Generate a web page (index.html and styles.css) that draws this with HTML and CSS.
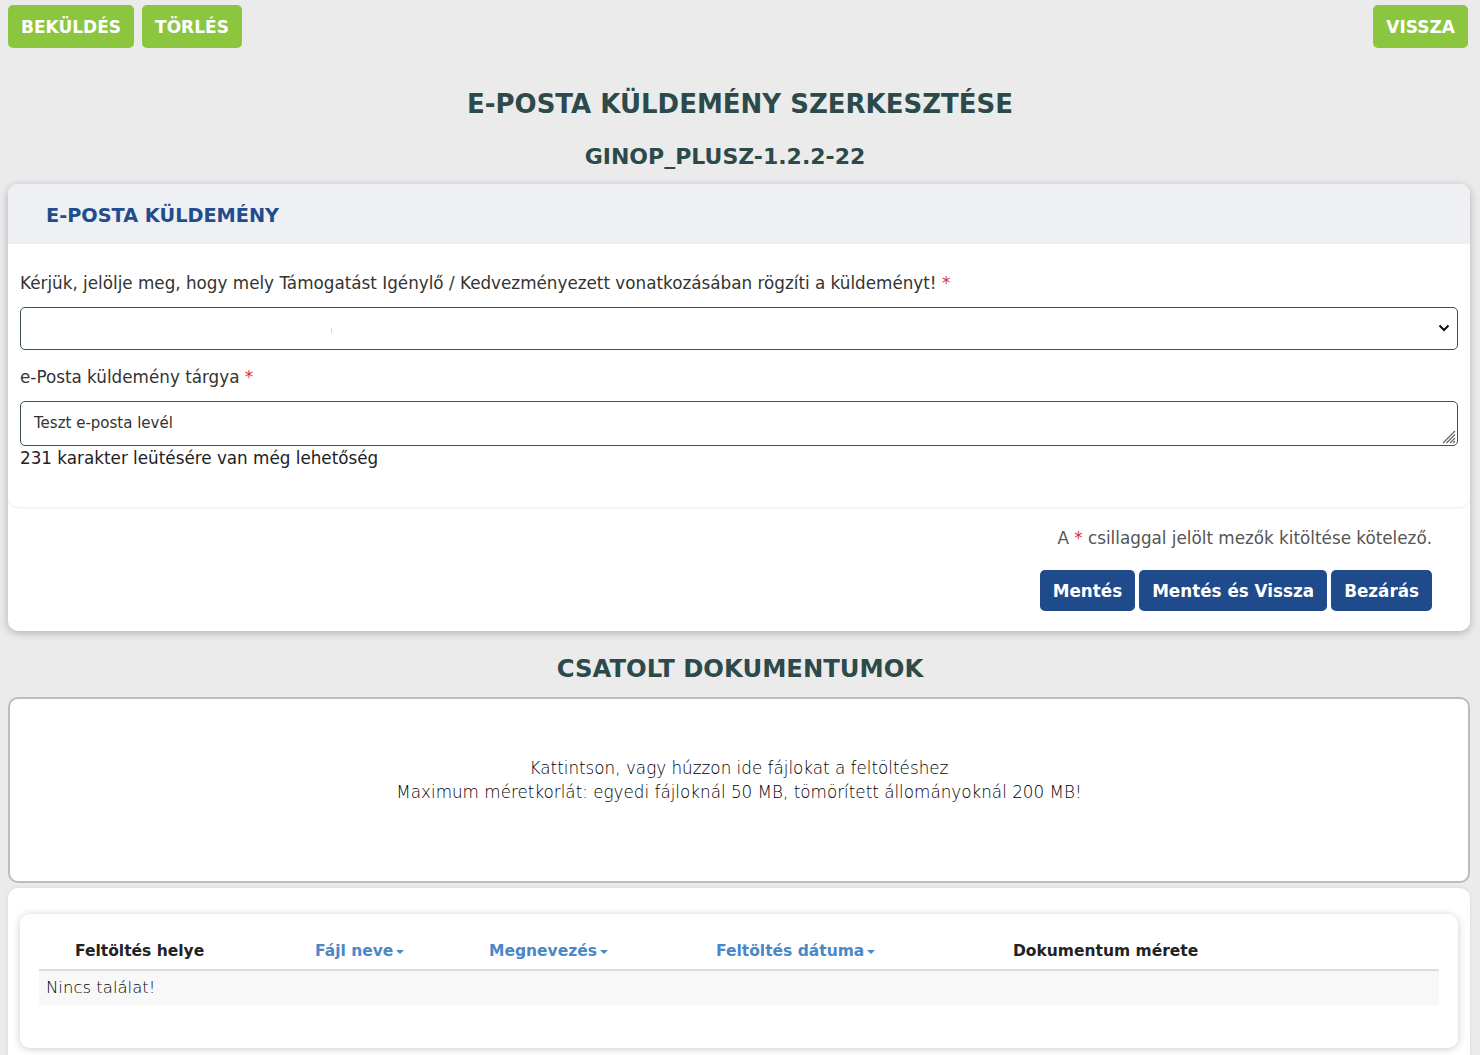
FILE: index.html
```html
<!DOCTYPE html>
<html lang="hu">
<head>
    <meta charset="UTF-8">
    <meta name="viewport" content="width=device-width, initial-scale=1.0">
    <title>E-posta küldemény szerkesztése</title>
    <link rel="stylesheet" href="styles.css">
</head>
<body>
    <div class="topbar">
        <div class="topbar-left">
            <button class="btn-green">Beküldés</button>
            <button class="btn-green">Törlés</button>
        </div>
        <button class="btn-green">Vissza</button>
    </div>

    <h1 class="page-title">E-posta küldemény szerkesztése</h1>
    <div class="page-sub">GINOP_PLUSZ-1.2.2-22</div>

    <div class="card">
        <div class="card-head">E-posta küldemény</div>
        <div class="card-body">
            <label class="field-label">Kérjük, jelölje meg, hogy mely Támogatást Igénylő / Kedvezményezett vonatkozásában rögzíti a küldeményt! <i class="req">*</i></label>
            <div class="select">
                <span class="select-tick"></span>
                <svg class="select-arrow" width="12" height="8" viewBox="0 0 12 8"><path d="M1.5 1.5 L6 6 L10.5 1.5" fill="none" stroke="#111" stroke-width="2"/></svg>
            </div>
            <label class="field-label">e-Posta küldemény tárgya <i class="req">*</i></label>
            <div class="textarea">
                Teszt e-posta levél
                <svg class="grip" width="16" height="16" viewBox="0 0 16 16"><path d="M15 3 L3 15 M15 6.5 L6.5 15 M15 10 L10 15 M15 13 L13 15" stroke="#666" stroke-width="1.2"/></svg>
            </div>
            <div class="counter">231 karakter leütésére van még lehetőség</div>
        </div>
        <div class="card-foot">
            <p class="note">A <i class="req">*</i> csillaggal jelölt mezők kitöltése kötelező.</p>
            <div class="actions">
                <button class="btn-blue">Mentés</button>
                <button class="btn-blue">Mentés és Vissza</button>
                <button class="btn-blue">Bezárás</button>
            </div>
        </div>
    </div>

    <h2 class="section-title">Csatolt dokumentumok</h2>
    <div class="dropzone">
        <p>Kattintson, vagy húzzon ide fájlokat a feltöltéshez</p>
        <p>Maximum méretkorlát: egyedi fájloknál 50 MB, tömörített állományoknál 200 MB!</p>
    </div>

    <div class="list-wrap">
        <div class="list-card">
            <table class="grid">
                <thead>
                    <tr>
                        <th class="c1">Feltöltés helye</th>
                        <th class="c2 sort">Fájl neve<span class="caret"></span></th>
                        <th class="c3 sort">Megnevezés<span class="caret"></span></th>
                        <th class="c4 sort">Feltöltés dátuma<span class="caret"></span></th>
                        <th class="c5">Dokumentum mérete</th>
                    </tr>
                </thead>
                <tbody>
                    <tr><td colspan="5">Nincs találat!</td></tr>
                </tbody>
            </table>
        </div>
    </div>
</body>
</html>
```

FILE: styles.css
```css
body{
    margin: 0;
    padding: 5px 8px 0 8px;
    background: #ebebeb;
    font-family: "DejaVu Sans", "Open Sans", sans-serif;
    color: #333;
}
button{
    font-family: inherit;
    border: none;
    cursor: pointer;
}
.topbar{
    display: flex;
    justify-content: space-between;
    margin-right: 4px;
}
.topbar-left{
    display: flex;
    gap: 8px;
}
.btn-green{
    background: #8cc63f;
    color: #fff;
    font-weight: 700;
    font-size: 17px;
    text-transform: uppercase;
    height: 43px;
    padding: 0 13px;
    border-radius: 5px;
}
.page-title{
    text-align: center;
    text-transform: uppercase;
    color: #2c4a4a;
    font-size: 26px;
    line-height: 30px;
    font-weight: 700;
    margin: 41px 0 0 0;
}
.page-sub{
    text-align: center;
    padding-right: 30px;
    color: #2c4a4a;
    font-size: 22px;
    line-height: 26px;
    font-weight: 700;
    margin: 25px 0 14px 0;
}
.card{
    background: #fff;
    border-radius: 10px;
    box-shadow: 0 2px 8px rgba(0,0,0,0.25);
    margin-right: 2px;
    overflow: hidden;
}
.card-head{
    background: #eef0f4;
    color: #1f4d8d;
    font-weight: 700;
    font-size: 19.3px;
    text-transform: uppercase;
    height: 60px;
    line-height: 64px;
    padding-left: 38px;
}
.card-body{
    padding: 27px 12px 37px 12px;
    border-radius: 0 0 10px 10px;
    box-shadow: 0 1px 2px rgba(0,0,0,0.08);
}
.field-label{
    display: block;
    font-size: 16.8px;
    line-height: 24px;
    color: #333;
}
.req{
    font-style: normal;
    color: #d0313b;
}
.select{
    position: relative;
    height: 43px;
    box-sizing: border-box;
    border: 1px solid #3c5252;
    border-radius: 5px;
    margin: 12px 0 15px 0;
}
.select-tick{
    position: absolute;
    left: 310px;
    top: 20px;
    width: 1px;
    height: 5px;
    background: #bfe0e0;
}
.select-arrow{
    position: absolute;
    right: 7px;
    top: 16px;
}
.textarea{
    position: relative;
    border: 1px solid #3c5252;
    border-radius: 5px;
    margin-top: 12px;
    padding-left: 13px;
    line-height: 42px;
    font-size: 15px;
    box-sizing: border-box;
    height: 45px;
}
.grip{
    position: absolute;
    right: 1px;
    bottom: 1px;
}
.counter{
    font-size: 16.8px;
    line-height: 24px;
    color: #222;
}
.card-foot{
    padding: 19px 38px 20px 0;
    text-align: right;
}
.note{
    margin: 0;
    font-size: 16.8px;
    line-height: 24px;
    color: #555;
}
.actions{
    display: flex;
    justify-content: flex-end;
    gap: 4px;
    margin-top: 20px;
}
.btn-blue{
    background: #1f4a8b;
    color: #fff;
    font-weight: 700;
    font-size: 16.8px;
    height: 41px;
    padding: 0 13px;
    border-radius: 5px;
}
.section-title{
    text-align: center;
    text-transform: uppercase;
    color: #2c4a4a;
    font-size: 24.3px;
    font-weight: 700;
    margin: 23px 0 13px 0;
    line-height: 30px;
}
.dropzone{
    background: #fff;
    border: 2px solid #bcbcbc;
    border-radius: 10px;
    margin-right: 2px;
    display: flex;
    flex-direction: column;
    justify-content: center;
    align-items: center;
    font-size: 16.8px;
    font-weight: 300;
    color: #000;
    padding-bottom: 20px;
    box-sizing: border-box;
    height: 186px;
}
.dropzone p{
    margin: 0;
    line-height: 24px;
}
.list-wrap{
    background: #fff;
    border-radius: 10px 10px 0 0;
    margin: 5px 2px 0 0;
    padding: 26px 12px 8px 12px;
    box-shadow: 0 0 4px rgba(0,0,0,0.08);
}
.list-card{
    background: #fff;
    border-radius: 10px;
    box-shadow: 0 1px 8px rgba(0,0,0,0.2);
    padding: 0 19px 43px 19px;
}
.grid{
    width: 100%;
    border-collapse: collapse;
}
.grid th{
    text-align: left;
    font-size: 15.5px;
    line-height: 20px;
    font-weight: 700;
    color: #222;
    padding: 27px 0 8px 0;
    border-bottom: 2px solid #ddd;
}
.grid th.sort{
    color: #4a87c6;
}
.caret{
    display: inline-block;
    width: 0;
    height: 0;
    border-left: 4px solid transparent;
    border-right: 4px solid transparent;
    border-top: 4px solid #4a87c6;
    margin-left: 3px;
    vertical-align: middle;
}
.c1{ width: 240px; padding-left: 36px !important; }
.c2{ width: 174px; }
.c3{ width: 227px; }
.c4{ width: 297px; }
.grid td{
    background: #f8f8f8;
    font-size: 16.5px;
    line-height: 20px;
    font-weight: 300;
    padding: 7px 7px 7px 7px;
    color: #000;
}
```
